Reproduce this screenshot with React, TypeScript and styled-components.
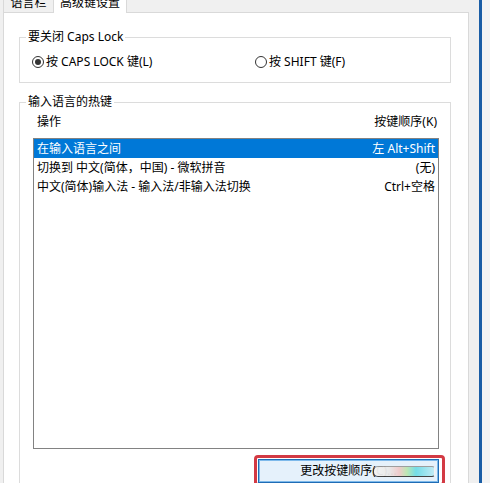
import React from "react";
import styled, { createGlobalStyle } from "styled-components";

const GlobalStyle = createGlobalStyle`
  html, body {
    margin: 0;
    padding: 0;
    background: #f0f0f0;
  }
  body {
    font-family: "Segoe UI", "Noto Sans", "Noto Sans CJK SC", sans-serif;
    font-size: 12px;
    color: #000;
  }
  #root {
    width: 490px;
    height: 483px;
    overflow: hidden;
  }
`;

const Screen = styled.div`
  display: flex;
  width: 490px;
  height: 483px;
  overflow: hidden;
`;

const Dialog = styled.div`
  display: flex;
  flex-direction: column;
  width: 479px;
  padding-left: 3px;
  box-sizing: border-box;
  background: #f0f0f0;
`;

const BlueEdge = styled.div`
  width: 3px;
  background: #1b5ea6;
`;

const Outside = styled.div`
  flex: 1;
  background: #f4f4f4;
`;

const TabStrip = styled.div`
  display: flex;
  align-items: flex-end;
  height: 12px;
  flex: none;
`;

const Tab = styled.div<{ $active?: boolean; $w: number }>`
  box-sizing: border-box;
  width: ${(p) => p.$w}px;
  height: ${(p) => (p.$active ? 23 : 22)}px;
  margin-bottom: ${(p) => (p.$active ? -1 : 0)}px;
  padding-top: 4px;
  line-height: 16px;
  text-align: center;
  background: ${(p) => (p.$active ? "#ffffff" : "#f0f0f0")};
  border: 1px solid #d9d9d9;
  border-bottom: none;
  ${(p) => (p.$active ? "" : "border-right: none;")}
  position: relative;
  z-index: ${(p) => (p.$active ? 1 : 0)};
  white-space: nowrap;
`;

const Panel = styled.div`
  flex: 1;
  width: 466px;
  box-sizing: border-box;
  background: #ffffff;
  border: 1px solid #d9d9d9;
  padding: 16px 0 0 15px;
`;

const GroupBox = styled.fieldset<{ $gap?: number }>`
  box-sizing: border-box;
  width: 432px;
  margin: ${(p) => p.$gap ?? 0}px 0 0 0;
  padding: 0;
  border: 1px solid #dcdcdc;
  min-inline-size: 0;
`;

const Legend = styled.legend`
  margin-left: 6px;
  padding: 0 2px;
  line-height: 16px;
  font-size: 12px;
`;

const RadioRow = styled.div`
  display: flex;
  align-items: center;
  height: 16px;
  margin-top: 9px;
  padding: 0 0 12px 12px;
`;

const RadioLabel = styled.label<{ $w?: number }>`
  display: flex;
  align-items: center;
  gap: 2px;
  ${(p) => (p.$w ? `width: ${p.$w}px;` : "")}
  line-height: 16px;
  white-space: nowrap;
`;

const RadioCircle = styled.span<{ $checked?: boolean }>`
  box-sizing: border-box;
  width: 12px;
  height: 12px;
  border: 1px solid #333333;
  border-radius: 50%;
  display: flex;
  align-items: center;
  justify-content: center;
  &::after {
    content: "";
    width: 6px;
    height: 6px;
    border-radius: 50%;
    background: ${(p) => (p.$checked ? "#333333" : "transparent")};
  }
`;

const HeaderRow = styled.div`
  display: flex;
  justify-content: space-between;
  height: 16px;
  line-height: 16px;
  margin: 4px 11px 0 13px;
  padding: 0 2px 0 4px;
`;

const ListBox = styled.div`
  box-sizing: border-box;
  height: 311px;
  margin: 8px 11px 0 13px;
  border: 1px solid #828282;
  background: #ffffff;
`;

const ListRow = styled.div<{ $selected?: boolean }>`
  display: flex;
  justify-content: space-between;
  height: 19px;
  line-height: 19px;
  padding: 0 3px;
  background: ${(p) => (p.$selected ? "#0078d7" : "transparent")};
  color: ${(p) => (p.$selected ? "#ffffff" : "#000000")};
  white-space: nowrap;
`;

const ButtonRow = styled.div`
  display: flex;
  justify-content: flex-end;
  margin-top: 6px;
  padding: 0 5px 40px 0;
`;

const Highlight = styled.div`
  box-sizing: border-box;
  width: 191px;
  border: 3px solid #d33a44;
  border-radius: 4px;
  padding: 1px 2px 0 1px;
`;

const ActionButton = styled.div`
  position: relative;
  box-sizing: border-box;
  width: 181px;
  height: 24px;
  border: 1px solid #1f6cb5;
  box-shadow: inset 0 0 0 1px rgba(0, 120, 215, 0.45);
  background: #e5f1fb;
  display: flex;
  align-items: center;
  justify-content: center;
  line-height: 16px;
  white-space: nowrap;
`;

const Smear = styled.span`
  position: absolute;
  left: 114px;
  top: 6px;
  width: 60px;
  height: 9px;
  border-radius: 5px 3px 3px 5px;
  border: 1.5px solid #3a3a3a;
  border-right-color: transparent;
  border-top-color: #9a9a9a;
  background: linear-gradient(
    90deg,
    #f4f4f4 0%,
    #e9e9e9 25%,
    #f0c9c9 42%,
    #b9e7b0 55%,
    #6fdde8 70%,
    #bfeaf5 100%
  );
  opacity: 0.95;
`;

const rows = [
  { op: "在输入语言之间", key: "左 Alt+Shift", selected: true },
  { op: "切换到 中文(简体，中国) - 微软拼音", key: "(无)" },
  { op: "中文(简体)输入法 - 输入法/非输入法切换", key: "Ctrl+空格" },
];

export default function App() {
  return (
    <>
      <GlobalStyle />
      <Screen>
        <Dialog>
          <TabStrip>
            <Tab $w={50}>语言栏</Tab>
            <Tab $w={74} $active>
              高级键设置
            </Tab>
          </TabStrip>
          <Panel>
            <GroupBox>
              <Legend>要关闭 Caps Lock</Legend>
              <RadioRow>
                <RadioLabel $w={223}>
                  <RadioCircle $checked />
                  按 CAPS LOCK 键(L)
                </RadioLabel>
                <RadioLabel>
                  <RadioCircle />
                  按 SHIFT 键(F)
                </RadioLabel>
              </RadioRow>
            </GroupBox>
            <GroupBox $gap={11}>
              <Legend>输入语言的热键</Legend>
              <HeaderRow>
                <span>操作</span>
                <span>按键顺序(K)</span>
              </HeaderRow>
              <ListBox>
                {rows.map((r) => (
                  <ListRow key={r.op} $selected={r.selected}>
                    <span>{r.op}</span>
                    <span>{r.key}</span>
                  </ListRow>
                ))}
              </ListBox>
              <ButtonRow>
                <Highlight>
                  <ActionButton>
                    更改按键顺序(C)...
                    <Smear />
                  </ActionButton>
                </Highlight>
              </ButtonRow>
            </GroupBox>
          </Panel>
        </Dialog>
        <BlueEdge />
        <Outside />
      </Screen>
    </>
  );
}
